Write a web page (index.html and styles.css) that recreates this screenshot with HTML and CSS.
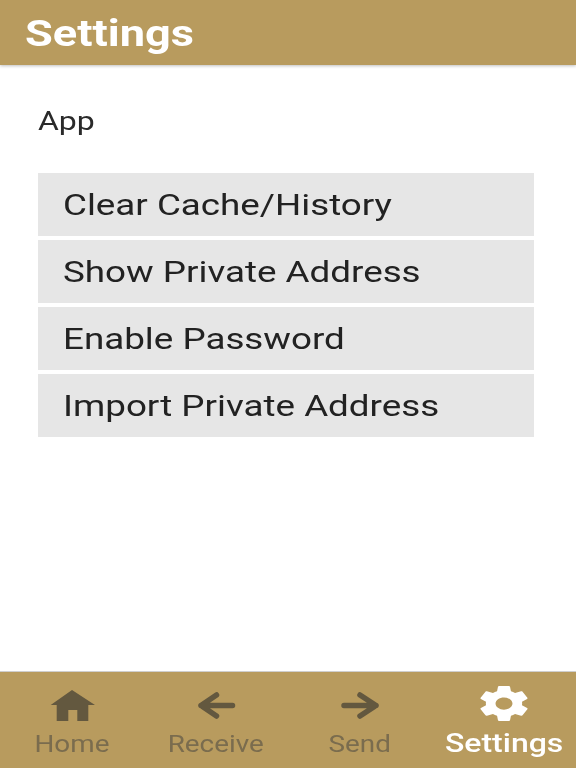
FILE: index.html
```html
<!DOCTYPE html>
<html lang="en">
<head>
    <meta charset="UTF-8">
    <meta name="viewport" content="width=device-width, initial-scale=1.0">
    <title>Settings</title>
    <link rel="stylesheet" href="styles.css">
</head>
<body>
    <div class="app">
        <header class="top-bar">
            <h1>Settings</h1>
        </header>

        <!-- Settings list -->
        <main class="content">
            <p class="section-label"><span>App</span></p>
            <div class="setting-list">
                <div class="setting-row"><span>Clear Cache/History</span></div>
                <div class="setting-row"><span>Show Private Address</span></div>
                <div class="setting-row"><span>Enable Password</span></div>
                <div class="setting-row"><span>Import Private Address</span></div>
            </div>
        </main>

        <!-- Bottom tabs -->
        <nav class="tab-bar">
            <div class="tab">
                <svg class="tab-icon icon-home" viewBox="0 0 48 36"><path d="M24 4 L2.700 19 H8.700 V35 H20.300 V24 H29.300 V35 H40.300 V19 H47 Z" fill="currentColor"/></svg>
                <span class="tab-label">Home</span>
            </div>
            <div class="tab">
                <svg class="tab-icon" viewBox="0 0 48 36"><path d="M40.500 19.500 H9 M24.500 9 L9 19.500 L24.500 30" fill="none" stroke="currentColor" stroke-width="5.500" stroke-linecap="round" stroke-linejoin="round"/></svg>
                <span class="tab-label">Receive</span>
            </div>
            <div class="tab">
                <svg class="tab-icon" viewBox="0 0 48 36"><path d="M8 19.500 H40 M24 9 L40 19.500 L24 30" fill="none" stroke="currentColor" stroke-width="5.500" stroke-linecap="round" stroke-linejoin="round"/></svg>
                <span class="tab-label">Send</span>
            </div>
            <div class="tab tab-active">
                <svg class="tab-icon" viewBox="0 0 48 36"><g transform="translate(1.500 0) scale(2.42 1.75) translate(-2.7 -2)"><path fill="currentColor" fill-rule="evenodd" d="M19.430 12.980c.04-.32.07-.64.07-.98s-.03-.66-.07-.98l2.110-1.650c.19-.15.24-.42.12-.64l-2-3.460c-.12-.22-.39-.3-.61-.22l-2.490 1c-.52-.4-1.080-.73-1.690-.98l-.38-2.650C14.460 2.180 14.250 2 14 2h-4c-.25 0-.46.18-.49.42l-.38 2.650c-.61.25-1.170.59-1.690.98l-2.490-1c-.23-.09-.49 0-.61.22l-2 3.460c-.13.22-.07.49.12.64l2.110 1.650c-.04.32-.07.65-.07.98s.03.66.07.98l-2.110 1.650c-.19.15-.24.42-.12.64l2 3.460c.12.22.39.3.61.22l2.490-1c.52.4 1.080.73 1.690.98l.38 2.650c.03.24.24.42.49.42h4c.25 0 .46-.18.49-.42l.38-2.650c.61-.25 1.170-.59 1.690-.98l2.490 1c.23.09.49 0 .61-.22l2-3.460c.12-.22.07-.49-.12-.64l-2.110-1.650zM12 15.500c-1.930 0-3.500-1.570-3.500-3.500s1.570-3.500 3.500-3.500 3.500 1.570 3.500 3.500-1.570 3.500-3.500 3.500z"/></g></svg>
                <span class="tab-label">Settings</span>
            </div>
        </nav>
    </div>
</body>
</html>
```

FILE: styles.css
```css
* {
    box-sizing: border-box;
}

body {
    margin: 0;
    background-color: #ffffff;
    font-family: Roboto, Arial, sans-serif;
}

/* The whole screen is a soft, horizontally stretched capture */
.app {
    display: flex;
    flex-direction: column;
    height: 768px;
    filter: blur(0.5px);
}

.top-bar {
    display: flex;
    align-items: center;
    height: 65px;
    padding: 1px 0 0 25px;
    background-color: #b89b5e;
    box-shadow: 0 1px 3px rgba(0, 0, 0, 0.25);
}

.top-bar h1 {
    margin: 0;
    color: #ffffff;
    font-size: 37px;
    font-weight: 700;
    transform: scaleX(1.22);
    transform-origin: left center;
}

.content {
    flex: 1;
    padding: 0 42px 0 38px;
}

.section-label {
    margin: 41px 0 36px;
    height: 31px;
    color: #2a2a2a;
    font-size: 26px;
    line-height: 31px;
}

.section-label span,
.setting-row span {
    display: inline-block;
    transform: scaleX(1.23);
    transform-origin: left center;
}

.setting-list {
    display: flex;
    flex-direction: column;
    gap: 4px;
}

.setting-row {
    display: flex;
    align-items: center;
    height: 63px;
    padding-left: 24.500px;
    background-color: #e6e6e6;
    color: #222222;
    font-size: 29.900px;
}

.tab-bar {
    display: flex;
    height: 97px;
    background-color: #b89b5e;
    border-top: 1px solid #cfcfcf;
}

.tab {
    flex: 1;
    display: flex;
    flex-direction: column;
    align-items: center;
    padding-top: 14px;
    color: #63583f;
    font-size: 23px;
}

.tab-label {
    display: inline-block;
    margin-top: 9px;
    color: #7a6c4e;
    line-height: 28px;
    transform: scaleX(1.21);
}

.tab-active {
    color: #ffffff;
    font-size: 26px;
    font-weight: 500;
}

.tab-active .tab-label {
    margin-top: 7px;
    color: #ffffff;
    transform: scaleX(1.23);
}

.tab-icon {
    width: 48px;
    height: 36px;
}
```
